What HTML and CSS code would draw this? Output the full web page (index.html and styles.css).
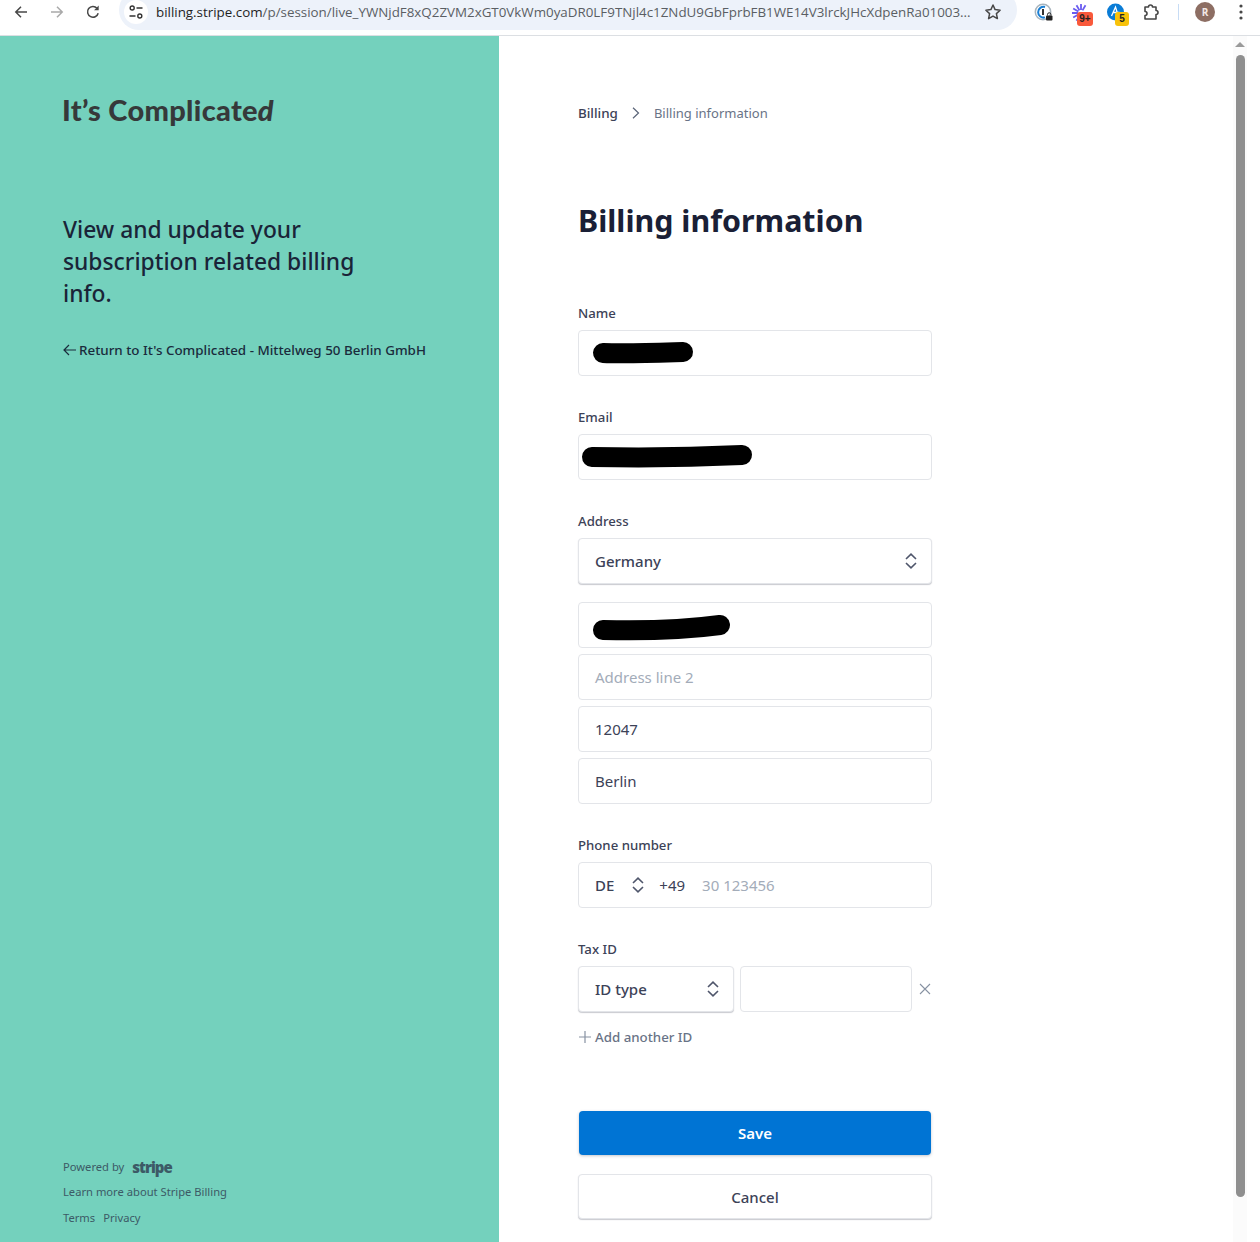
FILE: index.html
```html
<!DOCTYPE html>
<html lang="en">
<head>
    <meta charset="UTF-8">
    <title>Billing information</title>
    <link rel="stylesheet" href="styles.css">
</head>
<body>
    <div class="toolbar">
        <div class="tool"><svg width="16" height="16" viewBox="0 0 16 16"><path d="M14 8H3M8 2.800 2.800 8 8 13.200" fill="none" stroke="#474747" stroke-width="1.500"/></svg></div>
        <div class="tool"><svg width="16" height="16" viewBox="0 0 16 16"><path d="M2 8h11M8 2.800 13.200 8 8 13.200" fill="none" stroke="#a9a9a9" stroke-width="1.500"/></svg></div>
        <div class="tool"><svg width="16" height="16" viewBox="0 0 16 16"><path d="M13.200 9.200A5.400 5.400 0 1 1 12 4.200" fill="none" stroke="#474747" stroke-width="1.500"/><path d="M13.700 1.600v4.600H9.100z" fill="#474747"/></svg></div>
        <div class="url-pill">
            <span class="site-btn"><svg width="16" height="16" viewBox="0 0 16 16"><circle cx="4.200" cy="4" r="2" fill="none" stroke="#333" stroke-width="1.400"/><path d="M8.500 4h6M1.500 12h6" stroke="#333" stroke-width="1.400"/><circle cx="11.800" cy="12" r="2" fill="none" stroke="#333" stroke-width="1.400"/></svg></span>
            <span class="url"><span class="domain">billing.stripe.com</span>/p/session/live_YWNjdF8xQ2ZVM2xGT0VkWm0yaDR0LF9TNjl4c1ZNdU9GbFprbFB1WE14V3lrckJHcXdpenRa01003...</span>
            <svg class="star" width="18" height="18" viewBox="0 0 18 18"><path d="m9 2 2.100 4.600 5 .6-3.700 3.400 1 5L9 13.100l-4.400 2.500 1-5L1.900 7.200l5-.6z" fill="none" stroke="#474747" stroke-width="1.500" stroke-linejoin="round"/></svg>
        </div>
        <div class="tool">
            <svg width="20" height="20" viewBox="0 0 20 20"><circle cx="10" cy="10" r="7.700" fill="none" stroke="#a8b4bd" stroke-width="1.500"/><path d="M12 5a5.400 5.400 0 1 0 0 10.400" fill="none" stroke="#1a7fd4" stroke-width="2"/><path d="M10 7v6" stroke="#333" stroke-width="2"/><rect x="13" y="13.500" width="6.500" height="5" rx="1" fill="#222"/><path d="M14.500 13.500v-1a1.700 1.700 0 0 1 3.500 0v1" fill="none" stroke="#222" stroke-width="1"/></svg>
        </div>
        <div class="tool">
            <svg width="20" height="20" viewBox="0 0 20 20"><path d="M12 8V2M13.500 8.400l3-5.200M10.500 8.400l-3-5.200M9.400 9.500 4.200 6.500M9 11H3M9.400 12.500l-5.200 3M10.500 13.600l-3 5.200" stroke="#6a5cf0" stroke-width="1.800"/></svg>
            <span class="badge badge-red">9+</span>
        </div>
        <div class="tool">
            <svg width="20" height="20" viewBox="0 0 20 20"><circle cx="10.500" cy="10" r="8.500" fill="#0a7cd6"/><path d="M6.500 14 10.500 5l2.500 8M7.500 10.500h7" fill="none" stroke="#fff" stroke-width="1.300"/></svg>
            <span class="badge badge-yellow">5</span>
        </div>
        <div class="tool"><svg width="18" height="18" viewBox="0 0 18 18"><path d="M3 4h3.500a2 2 0 0 1 4 0H14v3.500a2 2 0 0 1 0 4V16H3v-3.500a2 2 0 0 0 0-4z" fill="none" stroke="#474747" stroke-width="1.600" stroke-linejoin="round"/></svg></div>
        <div class="divider-slot"><span class="divider"></span></div>
        <div class="tool"><span class="avatar">R</span></div>
        <div class="tool"><svg width="4" height="16" viewBox="0 0 4 16"><circle cx="2" cy="2" r="1.600" fill="#474747"/><circle cx="2" cy="8" r="1.600" fill="#474747"/><circle cx="2" cy="14" r="1.600" fill="#474747"/></svg></div>
    </div>

    <div class="page">
        <aside class="side">
            <div>
                <div class="logo">It’s Complicate<em>d</em></div>
                <h2 class="tagline">View and update your subscription related billing info.</h2>
                <a class="return-link"><svg width="13" height="12" viewBox="0 0 13 12"><path d="M13 6H1.500M6 1 1 6l5 5" fill="none" stroke="#1a2b3c" stroke-width="1.200"/></svg>Return to It's Complicated - Mittelweg 50 Berlin GmbH</a>
            </div>
            <div class="side-footer">
                <div class="powered">Powered by <span class="stripe-logo">stripe</span></div>
                <div class="footer-line">Learn more about Stripe Billing</div>
                <div class="footer-line footer-links"><span>Terms</span><span>Privacy</span></div>
            </div>
        </aside>

        <main class="main">
            <div class="crumbs">
                <span class="crumb-root">Billing</span>
                <svg width="8" height="12" viewBox="0 0 8 12"><path d="m1 .8 5.500 5.200L1 11.200" fill="none" stroke="#5a6478" stroke-width="1.200"/></svg>
                <span class="crumb-current">Billing information</span>
            </div>

            <h1>Billing information</h1>

            <form class="form">
                <div class="form-group">
                    <label>Name</label>
                    <div class="input">
                        <svg class="scribble scribble-name" width="104" height="26" viewBox="0 0 104 26"><path d="M11 13C35 14 60 13 91 12" fill="none" stroke="#000" stroke-width="20" stroke-linecap="round"/></svg>
                    </div>
                </div>

                <div class="form-group">
                    <label>Email</label>
                    <div class="input">
                        <svg class="scribble scribble-email" width="172" height="26" viewBox="0 0 172 26"><path d="M11 13C60 14 120 13 161 11" fill="none" stroke="#000" stroke-width="20" stroke-linecap="round"/></svg>
                    </div>
                </div>

                <div class="form-group">
                    <label>Address</label>
                    <div class="input select">
                        <span>Germany</span>
                        <svg class="updown" width="12" height="16" viewBox="0 0 12 16"><path d="M1 6 6 1.200 11 6M1 10l5 4.800L11 10" fill="none" stroke="#4f566b" stroke-width="1.600"/></svg>
                    </div>
                    <div class="address-lines">
                        <div class="input">
                            <svg class="scribble scribble-address" width="138" height="30" viewBox="0 0 138 30"><path d="M10 18C50 19 90 18 127 13" fill="none" stroke="#000" stroke-width="20" stroke-linecap="round"/></svg>
                        </div>
                        <div class="input placeholder">Address line 2</div>
                        <div class="input">12047</div>
                        <div class="input">Berlin</div>
                    </div>
                </div>

                <div class="form-group">
                    <label>Phone number</label>
                    <div class="input phone">
                        <span class="country">DE</span>
                        <svg class="updown" width="12" height="16" viewBox="0 0 12 16"><path d="M1 6 6 1.200 11 6M1 10l5 4.800L11 10" fill="none" stroke="#4f566b" stroke-width="1.600"/></svg>
                        <span class="dial">+49</span>
                        <span class="placeholder">30 123456</span>
                    </div>
                </div>

                <div class="form-group">
                    <label>Tax ID</label>
                    <div class="tax-row">
                        <div class="input select tax-type">
                            <span>ID type</span>
                            <svg class="updown" width="12" height="16" viewBox="0 0 12 16"><path d="M1 6 6 1.200 11 6M1 10l5 4.800L11 10" fill="none" stroke="#4f566b" stroke-width="1.600"/></svg>
                        </div>
                        <div class="input tax-value"></div>
                        <svg class="remove" width="12" height="12" viewBox="0 0 12 12"><path d="m1 1 10 10M11 1 1 11" stroke="#8792a2" stroke-width="1.100"/></svg>
                    </div>
                    <div class="add-id">
                        <svg width="12" height="12" viewBox="0 0 12 12"><path d="M6 0v12M0 6h12" stroke="#8792a2" stroke-width="1.200"/></svg>
                        Add another ID
                    </div>
                </div>

                <div class="actions">
                    <button type="button" class="btn btn-save">Save</button>
                    <button type="button" class="btn btn-cancel">Cancel</button>
                </div>
            </form>
        </main>

        <div class="scrollbar">
            <span class="scroll-arrow"></span>
            <span class="scroll-thumb"></span>
        </div>
    </div>
</body>
</html>
```

FILE: styles.css
```css
* {
    margin: 0;
    padding: 0;
    box-sizing: border-box;
}

body {
    font-family: 'Noto Sans', 'Open Sans', sans-serif;
    background: white;
    height: 1242px;
    overflow: hidden;
    color: #3c4257;
}

/* browser chrome */
.toolbar {
    height: 36px;
    display: flex;
    align-items: center;
    padding: 0 1px 0 3px;
    border-bottom: 1px solid #dcdfe3;
    background: white;
}

.toolbar > * {
    margin-top: -11px;
}

.tool {
    position: relative;
    width: 36px;
    height: 20px;
    flex: none;
    display: flex;
    align-items: center;
    justify-content: center;
}

.url-pill {
    width: 898px;
    height: 40px;
    margin: -15px 8px 0 8px;
    padding: 4px 15px 0 5px;
    background: #edf2fa;
    border-radius: 20px;
    display: flex;
    align-items: center;
    flex: none;
    font-family: 'Open Sans', sans-serif;
}

.site-btn {
    width: 24px;
    height: 24px;
    border-radius: 50%;
    background: white;
    display: flex;
    align-items: center;
    justify-content: center;
    flex: none;
}

.url {
    margin-left: 8px;
    font-size: 13.36px;
    color: #5a5e63;
    white-space: nowrap;
    width: 816px;
    flex: none;
}

.domain {
    color: #1f1f1f;
}

.star {
    margin-left: 12px;
    flex: none;
}

.badge {
    position: absolute;
    right: 4px;
    top: 10px;
    height: 14px;
    min-width: 14px;
    padding: 0 2px;
    border-radius: 3px;
    font: 700 10px/14px 'Liberation Sans', sans-serif;
    text-align: center;
    color: #222;
}

.badge-red {
    min-width: 16px;
    background: #f9593b;
}

.badge-yellow {
    background: #f8c20a;
}

.divider-slot {
    width: 18px;
    flex: none;
    display: flex;
    justify-content: center;
}

.divider {
    width: 1px;
    height: 16px;
    background: #c7dcf5;
}

.avatar {
    width: 20px;
    height: 20px;
    border-radius: 50%;
    background: #8d6e63;
    color: #f3e9e6;
    font: 700 10px/20px 'Open Sans', sans-serif;
    text-align: center;
}

/* page */
.page {
    height: 1206px;
    display: flex;
}

.side {
    width: 499px;
    flex: none;
    background: #74d1bd;
    padding: 60px 30px 15px 63px;
    display: flex;
    flex-direction: column;
    justify-content: space-between;
}

.logo {
    font-family: 'Lato', sans-serif;
    font-weight: 900;
    font-size: 29px;
    line-height: 30px;
    letter-spacing: 0.3px;
    color: #36393a;
    margin: -1px 0 0 -1px;
}

.tagline {
    margin-top: 89px;
    width: 320px;
    font-size: 22.8px;
    line-height: 32px;
    font-weight: 500;
    color: #1a2438;
}

.return-link {
    display: flex;
    align-items: center;
    gap: 3px;
    margin-top: 30px;
    font-size: 13.4px;
    line-height: 20px;
    font-weight: 500;
    color: #1a2b3c;
    white-space: nowrap;
}

.side-footer {
    font-size: 11.2px;
    color: #3c5a66;
}

.powered {
    display: flex;
    align-items: center;
    gap: 8px;
    line-height: 20px;
}

.stripe-logo {
    font-family: 'Open Sans', sans-serif;
    font-weight: 800;
    font-size: 15px;
    letter-spacing: -1px;
}

.footer-line {
    margin-top: 6px;
    line-height: 18px;
}

.footer-links {
    display: flex;
    gap: 8px;
    margin-top: 8px;
}

.main {
    flex: 1;
    padding: 66px 0 0 79px;
}

.crumbs {
    display: flex;
    align-items: center;
    gap: 14px;
    font-size: 13px;
    line-height: 22px;
}

.crumb-root {
    font-size: 13.4px;
    font-weight: 500;
}

.crumb-current {
    color: #697386;
}

h1 {
    margin-top: 75px;
    font-size: 30.4px;
    line-height: 44px;
    font-weight: 700;
    color: #1a1f36;
}

.form {
    width: 354px;
    margin-top: 60px;
}

.form-group {
    margin-bottom: 31px;
}

.form-group label {
    display: block;
    font-size: 13.2px;
    line-height: 20px;
    font-weight: 500;
    margin-bottom: 7px;
}

.input {
    position: relative;
    height: 46px;
    padding: 0 16px;
    border: 1px solid #e3e5e9;
    border-radius: 4px;
    background: white;
    display: flex;
    align-items: center;
    font-size: 15px;
    color: #3c4257;
}

.input.placeholder,
.placeholder {
    color: #a3acb9;
}

.select {
    justify-content: space-between;
    padding-right: 14px;
    font-weight: 500;
    box-shadow: 0 1px 1px rgba(60, 66, 87, 0.28);
}

.address-lines {
    display: flex;
    flex-direction: column;
    gap: 6px;
    margin-top: 18px;
}

.scribble {
    position: absolute;
    top: 9px;
}

.scribble-name {
    left: 13px;
}

.scribble-email {
    left: 2px;
}

.scribble-address {
    left: 14px;
}

.country {
    font-weight: 500;
}

.phone .updown {
    margin: 0 15px 0 18px;
}

.dial {
    margin-right: 17px;
}

.tax-row {
    display: flex;
    align-items: center;
    gap: 6px;
}

.tax-type {
    width: 156px;
}

.tax-value {
    width: 172px;
}

.remove {
    margin-left: 1px;
}

.add-id {
    display: flex;
    align-items: center;
    gap: 4px;
    margin-top: 15px;
    font-size: 13.3px;
    line-height: 20px;
    font-weight: 500;
    color: #697386;
    padding-left: 1px;
}

.actions {
    display: flex;
    flex-direction: column;
    gap: 19px;
    margin-top: 64px;
}

.btn {
    height: 45px;
    border-radius: 4px;
    font-family: inherit;
    font-size: 15px;
    font-weight: 600;
    cursor: pointer;
}

.btn-save {
    margin: 0 1px;
    height: 44px;
    border: none;
    color: white;
    background: #0074d4;
    box-shadow: 0 1px 3px rgba(60, 66, 87, 0.3);
}

.btn-cancel {
    border: 1px solid #e3e5e9;
    background: white;
    color: #3c4257;
    font-weight: 500;
    box-shadow: 0 1px 1px rgba(60, 66, 87, 0.28);
}

.scrollbar {
    width: 14px;
    margin-right: 13px;
    flex: none;
    display: flex;
    flex-direction: column;
    align-items: center;
    background: #fbfbfb;
}

.scroll-arrow {
    margin-top: 6px;
    border: 5px solid transparent;
    border-top: none;
    border-bottom: 5px solid #9a9a9a;
}

.scroll-thumb {
    margin-top: 8px;
    width: 9px;
    height: 1142px;
    border-radius: 5px;
    background: #8f8f8f;
}
```
